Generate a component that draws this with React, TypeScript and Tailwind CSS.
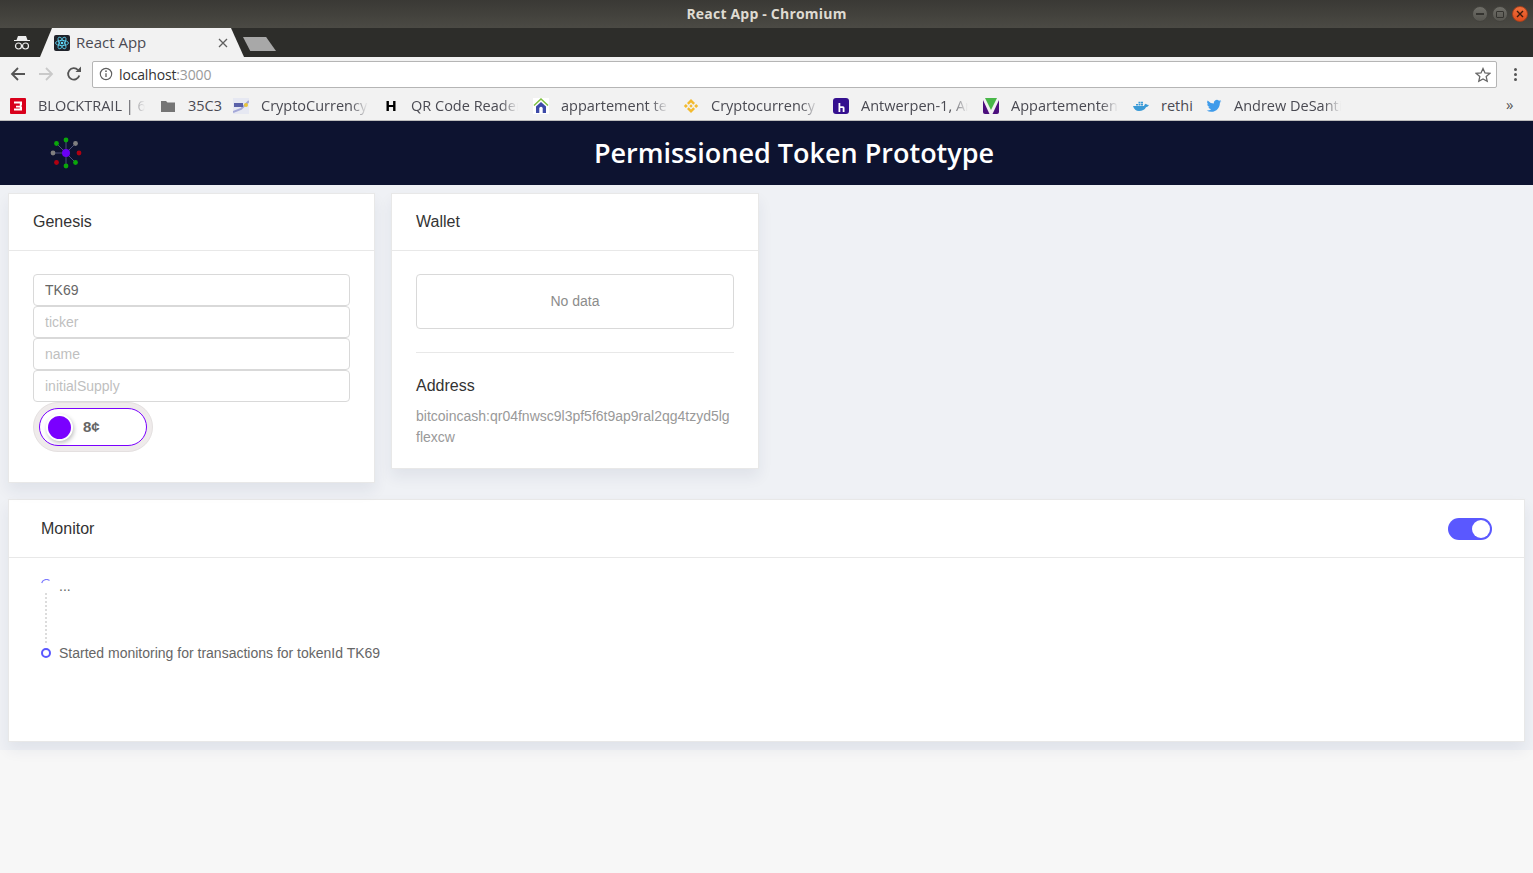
import React from "react";

const ui = "font-['Open_Sans','Noto_Sans',sans-serif]";

function Fav({ kind }: { kind: string }) {
  const c = "w-4 h-4 shrink-0";
  switch (kind) {
    case "blocktrail":
      return (
        <svg viewBox="0 0 16 16" className={c}>
          <rect width="16" height="16" fill="#d9001b" rx="1" />
          <path d="M4 3.500h8v3.700l-1 .8 1 .8v3.700H4v-2h5.800V9.500H6V7.700h3.800V5.500H4z" fill="#fff" />
        </svg>
      );
    case "folder":
      return (
        <svg viewBox="0 0 16 16" className={c}>
          <path d="M1 3h5l1.500 1.500H15v9.500H1z" fill="#757575" />
        </svg>
      );
    case "crypto":
      return (
        <svg viewBox="0 0 16 16" className={c}>
          <rect width="16" height="16" fill="#e6e8f2" />
          <path d="M0 14 8 11l8-8" stroke="#a4a8d8" strokeWidth="2" fill="none" />
          <rect x="1" y="5" width="9" height="4" fill="#5a61a8" />
          <circle cx="13" cy="7" r="2" fill="#e9c53a" />
        </svg>
      );
    case "h":
      return (
        <svg viewBox="0 0 16 16" className={c}>
          <path d="M3.500 3h2.400v4h4.200V3h2.400v10h-2.400V9H5.900v4H3.500z" fill="#000" />
        </svg>
      );
    case "house":
      return (
        <svg viewBox="0 0 16 16" className={c}>
          <rect width="16" height="16" fill="#fff" />
          <path d="M1 7.500 8 1l7 6.500" stroke="#7fc241" strokeWidth="1.500" fill="none" />
          <path d="M3 8.500 8 4l5 4.500V15H3z" fill="#3d4aa8" />
          <path d="M6.300 15v-4.500a1.700 1.700 0 0 1 3.400 0V15z" fill="#fff" />
        </svg>
      );
    case "binance":
      return (
        <svg viewBox="0 0 16 16" className={c}>
          <g fill="#f3ba2f">
            <path d="M8 1 12 5 10.300 6.700 8 4.400 5.700 6.700 4 5z" />
            <path d="M8 15 12 11 10.300 9.300 8 11.600 5.700 9.300 4 11z" />
            <path d="M.8 8 2.800 6 4.800 8 2.800 10z" />
            <path d="M15.200 8 13.200 6 11.200 8 13.200 10z" />
            <path d="M8 6.300 9.700 8 8 9.700 6.300 8z" />
          </g>
        </svg>
      );
    case "hb":
      return (
        <svg viewBox="0 0 16 16" className={c}>
          <rect width="16" height="16" rx="3" fill="#35108f" />
          <path d="M5.500 5h1.800v3.200H10q1.500 0 1.500 1.500V14H9.700v-4H7.300v4H5.500z" fill="#fff" />
        </svg>
      );
    case "v":
      return (
        <svg viewBox="0 0 16 16" className={c}>
          <path d="M2 0h12L8 12z" fill="#49b749" />
          <path d="M0 2 6.500 16H2q-2 0-2-2z" fill="#4c0f7d" />
          <path d="M16 2 9.500 16H14q2 0 2-2z" fill="#4c0f7d" />
        </svg>
      );
    case "docker":
      return (
        <svg viewBox="0 0 16 16" className={c}>
          <path d="M0 8h11q.5-2 1.800-2.200Q14 7 16 7q-1 2-3 2.200Q11 13 6 13 1.500 13 0 8z" fill="#3a9ad6" />
          <path d="M3 6h2v1.500H3zM5.500 6h2v1.500h-2zM8 6h2v1.500H8zM5.500 3.800h2v1.700h-2zM8 3.800h2v1.700H8z" fill="#3a9ad6" />
        </svg>
      );
    case "twitter":
      return (
        <svg viewBox="0 0 24 24" className={c}>
          <path
            d="M23 4.900a9 9 0 0 1-2.600.7 4.500 4.500 0 0 0 2-2.500 9 9 0 0 1-2.900 1.100 4.500 4.500 0 0 0-7.700 4.100A12.800 12.800 0 0 1 2.500 3.600a4.500 4.500 0 0 0 1.400 6 4.500 4.500 0 0 1-2-.6c0 2.200 1.500 4.100 3.600 4.500a4.500 4.500 0 0 1-2 .1 4.500 4.500 0 0 0 4.200 3.100A9 9 0 0 1 1 18.600a12.800 12.800 0 0 0 6.900 2c8.300 0 12.900-6.900 12.900-12.900v-.6A9 9 0 0 0 23 4.900z"
            fill="#3f9bea"
          />
        </svg>
      );
    default:
      return null;
  }
}

const bookmarks = [
  { k: "blocktrail", t: "BLOCKTRAIL | 6", fade: true },
  { k: "folder", t: "35C3", fade: false },
  { k: "crypto", t: "CryptoCurrency", fade: true },
  { k: "h", t: "QR Code Reader", fade: true },
  { k: "house", t: "appartement te", fade: true },
  { k: "binance", t: "Cryptocurrency", fade: true },
  { k: "hb", t: "Antwerpen-1, Ar", fade: true },
  { k: "v", t: "Appartementen", fade: true },
  { k: "docker", t: "rethi", fade: false },
  { k: "twitter", t: "Andrew DeSanti", fade: true },
];

function Chrome() {
  return (
    <div className={ui}>
      {/* title bar */}
      <div className="h-[28px] bg-gradient-to-b from-[#3a3935] to-[#4b4a44] flex items-center relative">
        <div className="flex-1 text-center text-[14px] font-bold text-[#dfdbd2] tracking-[0.2px] pb-[2px]">
          React App - Chromium
        </div>
        <div className="absolute right-[5px] top-[6px] flex gap-[4px]">
          <div className="w-4 h-4 rounded-full bg-gradient-to-b from-[#6f6e68] to-[#56554f] border border-[#44433e] flex items-center justify-center">
            <div className="w-2 h-[2px] bg-[#34332f]" />
          </div>
          <div className="w-4 h-4 rounded-full bg-gradient-to-b from-[#6f6e68] to-[#56554f] border border-[#44433e] flex items-center justify-center">
            <div className="w-2 h-[7px] border border-[#34332f] rounded-[1px]" />
          </div>
          <div className="w-4 h-4 rounded-full bg-gradient-to-b from-[#f0703c] to-[#de4c1c] border border-[#a9411c] flex items-center justify-center">
            <svg viewBox="0 0 8 8" className="w-2 h-2">
              <path d="M1 1l6 6M7 1 1 7" stroke="#3a1a0c" strokeWidth="1.400" />
            </svg>
          </div>
        </div>
      </div>
      {/* tab strip */}
      <div className="h-[29px] bg-[#2d2d2a] flex items-end relative">
        <div className="w-[44px] h-full flex items-center justify-center shrink-0">
          <svg viewBox="0 0 18 14" className="w-[18px] h-[14px]">
            <path d="M5 0h8l1.500 4H17v1H1V4h2.500z" fill="#eeeeee" />
            <circle cx="5.500" cy="10" r="3" fill="none" stroke="#eeeeee" strokeWidth="1.200" />
            <circle cx="12.500" cy="10" r="3" fill="none" stroke="#eeeeee" strokeWidth="1.200" />
            <path d="M8.500 10h1" stroke="#eeeeee" />
          </svg>
        </div>
        <div className="w-[204px] h-full bg-[#f2f2f2] flex items-center pl-[16px] pr-[16px] -ml-[4px] [clip-path:polygon(0_100%,12px_0,calc(100%-13px)_0,100%_100%)]">
          <svg viewBox="0 0 16 16" className="w-4 h-4 shrink-0 ml-[-2px]">
            <rect width="16" height="16" rx="2" fill="#20232a" />
            <g fill="none" stroke="#61dafb" strokeWidth="0.800">
              <ellipse cx="8" cy="8" rx="6.500" ry="2.600" />
              <ellipse cx="8" cy="8" rx="6.500" ry="2.600" transform="rotate(60 8 8)" />
              <ellipse cx="8" cy="8" rx="6.500" ry="2.600" transform="rotate(120 8 8)" />
            </g>
            <circle cx="8" cy="8" r="1.300" fill="#61dafb" />
          </svg>
          <span className="ml-[6px] text-[15px] text-[#4a4a52] flex-1">React App</span>
          <svg viewBox="0 0 10 10" className="w-[10px] h-[10px]">
            <path d="M1 1l8 8M9 1 1 9" stroke="#5f5f5f" strokeWidth="1.300" />
          </svg>
        </div>
        <div className="ml-[-1px] mb-[6px] w-[33px] h-[14px] bg-[#a8a8a8] [clip-path:polygon(0_0,70%_0,100%_100%,22%_100%)]" />
      </div>
      {/* toolbar */}
      <div className="h-[34px] bg-[#f2f2f2] flex items-center">
        <div className="w-[92px] shrink-0 flex items-center pl-[10px] gap-[12px]">
          <svg viewBox="0 0 16 16" className="w-4 h-4">
            <path d="M15 8H2.500M8 2 2 8l6 6" fill="none" stroke="#555" strokeWidth="1.800" />
          </svg>
          <svg viewBox="0 0 16 16" className="w-4 h-4">
            <path d="M1 8h12.500M8 2l6 6-6 6" fill="none" stroke="#c9c9c9" strokeWidth="1.800" />
          </svg>
          <svg viewBox="0 0 16 16" className="w-4 h-4">
            <path d="M13.300 9.500A5.700 5.700 0 1 1 12 4" fill="none" stroke="#555" strokeWidth="1.800" />
            <path d="M9.500 6H15V.5z" fill="#555" />
          </svg>
        </div>
        <div className="w-[1405px] h-[27px] bg-white border border-[#b5b5b5] rounded-[2px] flex items-center pl-[6px] pr-[5px]">
          <svg viewBox="0 0 16 16" className="w-[14px] h-[14px] shrink-0">
            <circle cx="8" cy="8" r="6.500" fill="none" stroke="#5f5f5f" strokeWidth="1.300" />
            <path d="M8 7v4.500" stroke="#5f5f5f" strokeWidth="1.500" />
            <circle cx="8" cy="4.800" r="1" fill="#5f5f5f" />
          </svg>
          <span className="ml-[6px] text-[14px] text-[#333] flex-1 tracking-[-0.15px]">
            localhost<span className="text-[#9a9a9a]">:3000</span>
          </span>
          <svg viewBox="0 0 16 16" className="w-4 h-4 shrink-0 mt-[1px]">
            <path
              d="M8 1.500l2 4.400 4.800.5-3.600 3.200 1 4.700L8 11.900l-4.200 2.400 1-4.700L1.200 6.400 6 5.900z"
              fill="none"
              stroke="#666"
              strokeWidth="1.300"
            />
          </svg>
        </div>
        <div className="flex-1 flex flex-col items-center gap-[2px]">
          <div className="w-[3px] h-[3px] bg-[#555] rounded-full" />
          <div className="w-[3px] h-[3px] bg-[#555] rounded-full" />
          <div className="w-[3px] h-[3px] bg-[#555] rounded-full" />
        </div>
      </div>
      {/* bookmarks */}
      <div className="h-[30px] bg-[#f2f2f2] border-b border-[#bdbdbd] flex items-center pl-[10px] gap-[15px] relative">
        {bookmarks.map((b) => (
          <div key={b.t} className="flex items-center gap-[12px]">
            <Fav kind={b.k} />
            {b.fade ? (
              <span className="w-[107px] text-[14.500px] text-[#4a4a52] whitespace-nowrap overflow-hidden [mask-image:linear-gradient(to_right,#000_84%,transparent_100%)]">
                {b.t}
              </span>
            ) : (
              <span className="w-[30px] text-[14.500px] text-[#4a4a52] whitespace-nowrap">{b.t}</span>
            )}
          </div>
        ))}
        <span className="absolute left-[1506px] top-[2px] text-[15px] text-[#555]">»</span>
      </div>
    </div>
  );
}

function Logo() {
  const spokes = [
    [16, 3, "#0aa70a"],
    [25.500, 6.500, "#808080"],
    [29, 16, "#b00010"],
    [25.500, 25.500, "#0aa70a"],
    [16, 29, "#0aa70a"],
    [6.500, 25.500, "#b00010"],
    [3, 16, "#808080"],
    [6.500, 6.500, "#0aa70a"],
  ] as const;
  return (
    <svg viewBox="0 0 32 32" className="w-8 h-8 shrink-0">
      {spokes.map(([x, y, c], i) => (
        <g key={i}>
          {c !== "#b00010" && <line x1="16" y1="16" x2={x} y2={y} stroke="#4a5078" strokeWidth="1" />}
          <circle cx={x} cy={y} r="2.400" fill={c} />
        </g>
      ))}
      <circle cx="16" cy="16" r="4" fill="#6a00f4" />
    </svg>
  );
}

function Card({
  title,
  className,
  children,
}: {
  title: string;
  className: string;
  children: React.ReactNode;
}) {
  return (
    <div className={`bg-white border border-[#e8e8e8] shadow-[0_8px_14px_rgba(30,40,90,0.07)] ${className}`}>
      <div className="h-[57px] border-b border-[#e8e8e8] flex items-center px-6 text-[16px] text-[#333]">
        {title}
      </div>
      {children}
    </div>
  );
}

function Field({ placeholder, value }: { placeholder: string; value?: string }) {
  return (
    <input
      readOnly
      placeholder={placeholder}
      defaultValue={value}
      className="block w-full h-[32px] border border-[#d9d9d9] rounded-[4px] px-[11px] text-[14px] text-[#666] bg-white placeholder:text-[#bfbfbf] outline-none"
    />
  );
}

export default function App() {
  return (
    <div className="min-h-[873px] bg-[#f7f7f7] font-['Liberation_Sans',Arial,sans-serif]">
      <Chrome />
      <div className="h-[64px] bg-[#0d1330] flex items-center pl-[50px] pr-[27px]">
        <Logo />
        <h1 className={`flex-1 text-center text-[27px] font-semibold text-white ${ui}`}>
          Permissioned Token Prototype
        </h1>
      </div>
      <div className="bg-[#eff1f5] h-[565px] pt-[8px] px-[8px]">
        <div className="flex items-start gap-[16px]">
          <Card title="Genesis" className="w-[367px] h-[290px]">
            <div className="px-6 pt-[23px]">
              <Field placeholder="tokenId" value="TK69" />
              <Field placeholder="ticker" />
              <Field placeholder="name" />
              <Field placeholder="initialSupply" />
              <div className="w-[120px] h-[50px] rounded-full bg-[#efebeb] border border-[#e4e0e0] flex items-center justify-center">
                <div className="w-[108px] h-[38px] rounded-full bg-white border border-[#7a00ff] flex items-center pl-[6px] gap-[10px]">
                  <div className="w-[23px] h-[23px] rounded-full bg-[#7a00ff] border-[2px] border-white box-content shadow-[1px_2px_4px_rgba(0,0,0,0.25)]" />
                  <span className="text-[15px] font-bold text-[#666]">8¢</span>
                </div>
              </div>
            </div>
          </Card>
          <Card title="Wallet" className="w-[368px] h-[276px]">
            <div className="px-6 pt-[23px]">
              <div className="h-[55px] border border-[#d9d9d9] rounded-[4px] flex items-center justify-center text-[14px] text-[#8c8c8c]">
                No data
              </div>
              <div className="h-px bg-[#e8e8e8] mt-[23px]" />
              <div className="mt-[24px] text-[16px] text-[#333] leading-[18px]">Address</div>
              <div className="mt-[11px] pr-1 text-[14px] leading-[21px] text-[#999] break-all">
                bitcoincash:qr04fnwsc9l3pf5f6t9ap9ral2qg4tzyd5lgflexcw
              </div>
            </div>
          </Card>
        </div>
        <div className="mt-[16px] bg-white border border-[#e8e8e8] h-[243px] shadow-[0_8px_14px_rgba(30,40,90,0.07)]">
          <div className="h-[58px] border-b border-[#e8e8e8] flex items-center justify-between px-[32px] text-[16px] text-[#333]">
            <span>Monitor</span>
            <div className="w-[44px] h-[22px] rounded-full bg-[#5a58ff] flex items-center justify-end pr-[2px]">
              <div className="w-[18px] h-[18px] rounded-full bg-white" />
            </div>
          </div>
          <div className="pl-[32px] pt-[21px] text-[14px] text-[#666]">
            <div className="flex gap-2 h-[65px]">
              <div className="w-[10px] flex flex-col items-center shrink-0">
                <svg viewBox="0 0 10 10" className="w-[10px] h-[10px] shrink-0">
                  <path d="M.7 4A5 5 0 0 1 8.500 1.500" fill="none" stroke="#7d7bff" strokeWidth="1.200" />
                </svg>
                <div className="mt-[4px] h-[50px] border-l-2 border-dotted border-[#dcdcdc]" />
              </div>
              <span className="leading-[14px]">...</span>
            </div>
            <div className="flex gap-2 items-center">
              <div className="w-[10px] h-[10px] rounded-full border-[2px] border-[#5a58ff] shrink-0" />
              <span className="leading-[18px]">Started monitoring for transactions for tokenId TK69</span>
            </div>
          </div>
        </div>
      </div>
    </div>
  );
}
